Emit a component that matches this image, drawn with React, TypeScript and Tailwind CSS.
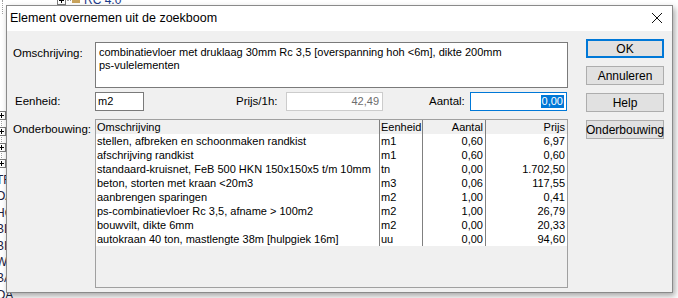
import React from 'react'

const ROWS = [
  { oms: 'stellen, afbreken en schoonmaken randkist', eh: 'm1', aantal: '0,60', prijs: '6,97' },
  { oms: 'afschrijving randkist', eh: 'm1', aantal: '0,60', prijs: '0,60' },
  { oms: 'standaard-kruisnet, FeB 500 HKN 150x150x5 t/m 10mm', eh: 'tn', aantal: '0,00', prijs: '1.702,50' },
  { oms: 'beton, storten met kraan <20m3', eh: 'm3', aantal: '0,06', prijs: '117,55' },
  { oms: 'aanbrengen sparingen', eh: 'm2', aantal: '1,00', prijs: '0,41' },
  { oms: 'ps-combinatievloer Rc 3,5, afname > 100m2', eh: 'm2', aantal: '1,00', prijs: '26,79' },
  { oms: 'bouwvilt, dikte 6mm', eh: 'm2', aantal: '0,00', prijs: '20,33' },
  { oms: 'autokraan 40 ton, mastlengte 38m [hulpgiek 16m]', eh: 'uu', aantal: '0,00', prijs: '94,60' },
]

const TREE = ['TRAPPEN', 'OAKEN', 'HOUT', 'BLOK', 'BINNEN', 'WLAND', 'BALK', 'OA']

function PlusBox({ className }: { className: string }) {
  return (
    <div className={`absolute w-[9px] h-[9px] border border-[#7a7a7a] bg-white flex items-center justify-center ${className}`}>
      <div className="relative w-[5px] h-[5px]">
        <div className="absolute left-0 top-[2px] w-[5px] h-px bg-black" />
        <div className="absolute left-[2px] top-0 w-px h-[5px] bg-black" />
      </div>
    </div>
  )
}

function Button({ label, primary = false }: { label: string; primary?: boolean }) {
  return (
    <div
      className={`h-[19px] flex items-center justify-center bg-[#e1e1e1] text-[12px] text-black ${
        primary ? 'border-2 border-[#0078d7]' : 'border border-[#adadad]'
      }`}
    >
      {label}
    </div>
  )
}

export default function App() {
  return (
    <div className="relative w-[678px] h-[298px] bg-white overflow-hidden font-['Liberation_Sans',Arial,sans-serif] text-[11px] text-black">
      {/* tree view behind the dialog */}
      <div className="absolute left-[2px] top-0 h-[14px] border-l border-dotted border-[#a0a0a0]" />
      <PlusBox className="left-[57px] top-[-4px]" />
      <div className="absolute left-[67px] top-0 w-[4px] border-t border-dotted border-[#a0a0a0]" />
      <div className="absolute left-[72px] top-[-3px] w-[8px] h-[6px] bg-[#c9a35c]" />
      <div className="absolute left-[84px] top-[-9px] text-[12px] text-[#1a3a8a]">RC 4.0</div>
      <PlusBox className="left-[-3px] top-[111px]" />
      <div className="absolute left-[1px] top-[121px] h-[5px] border-l border-dotted border-[#a0a0a0]" />
      <PlusBox className="left-[-3px] top-[127px]" />
      <div className="absolute left-[1px] top-[137px] h-[5px] border-l border-dotted border-[#a0a0a0]" />
      <PlusBox className="left-[-3px] top-[143px]" />
      <div className="absolute left-[1px] top-[153px] h-[5px] border-l border-dotted border-[#a0a0a0]" />
      <PlusBox className="left-[-3px] top-[159px]" />
      <div className="absolute left-[-4px] top-[172px] flex flex-col text-[12px] text-[#1a2040] leading-[16.4px]">
        {TREE.map(t => (
          <div key={t}>{t}</div>
        ))}
      </div>

      {/* dialog */}
      <div className="absolute left-[6px] top-[5px] w-[667px] h-[288px] border border-[#8a8a8a] bg-[#f0f0f0] shadow-[2px_3px_6px_rgba(0,0,0,0.35)] flex flex-col">
        <div className="h-[25px] bg-white flex items-center justify-between pl-[3px] pr-[9px]">
          <span className="text-[12.5px] mt-[-1px]">Element overnemen uit de zoekboom</span>
          <svg width="12" height="12" viewBox="0 0 12 12" className="mt-[-1px]">
            <path d="M1 1 L11 11 M11 1 L1 11" stroke="#111" strokeWidth="1" />
          </svg>
        </div>

        <div className="flex-1 flex">
          {/* left part */}
          <div className="flex flex-col pl-[6px] pt-[11px]">
            <div className="flex">
              <div className="w-[82px] pt-[3px] text-[11.5px]">Omschrijving:</div>
              <div className="w-[473px] h-[46px] bg-white border border-[#7a7a7a] px-[3px] pt-[3px] leading-[13px] text-[11px]">
                <div>combinatievloer met druklaag 30mm Rc 3,5 [overspanning hoh &lt;6m], dikte 200mm</div>
                <div>ps-vulelementen</div>
              </div>
            </div>

            <div className="flex items-center mt-[4px] h-[19px]">
              <div className="w-[82px] pl-[2px] text-[11.5px]">Eenheid:</div>
              <div className="w-[49px] h-[19px] bg-white border border-[#7a7a7a] px-[2px] flex items-center">m2</div>
              <div className="ml-[92px] w-[50px] text-[11.5px]">Prijs/1h:</div>
              <div className="w-[97px] h-[19px] bg-white border border-[#cccccc] px-[3px] flex items-center justify-end text-[#6d6d6d]">
                42,49
              </div>
              <div className="ml-[46px] w-[41px] text-[11.5px]">Aantal:</div>
              <div className="w-[97px] h-[19px] bg-white border border-[#0078d7] pr-[2px] flex items-center justify-end">
                <span className="bg-[#0078d7] text-white leading-[13px] px-px">0,00</span>
              </div>
            </div>

            <div className="flex mt-[8px]">
              <div className="w-[82px] pt-[2px] text-[11.5px]">Onderbouwing:</div>
              <div className="w-[473px] h-[169px] border border-[#a0a0a0] bg-[#f0f0f0] flex flex-col leading-[14px]">
                <div className="flex h-[14px] bg-[#f0f0f0]">
                  <div className="w-[284px] pl-[1px] border-r border-[#808080]">Omschrijving</div>
                  <div className="w-[43px] pl-[1px] border-r border-[#808080]">Eenheid</div>
                  <div className="w-[63px] pr-[2px] text-right border-r border-[#808080]">Aantal</div>
                  <div className="flex-1 pr-[2px] text-right">Prijs</div>
                </div>
                {ROWS.map(r => (
                  <div key={r.oms} className="flex h-[14px] bg-white">
                    <div className="w-[284px] pl-[1px] border-r border-[#808080] whitespace-nowrap overflow-hidden">{r.oms}</div>
                    <div className="w-[43px] pl-[1px] border-r border-[#808080]">{r.eh}</div>
                    <div className="w-[63px] pr-[2px] text-right border-r border-[#808080]">{r.aantal}</div>
                    <div className="flex-1 pr-[2px] text-right">{r.prijs}</div>
                  </div>
                ))}
              </div>
            </div>
          </div>

          {/* buttons */}
          <div className="flex flex-col gap-[8px] ml-[18px] pt-[8px] w-[78px]">
            <Button label="OK" primary />
            <Button label="Annuleren" />
            <Button label="Help" />
            <Button label="Onderbouwing" />
          </div>
        </div>
      </div>
    </div>
  )
}
